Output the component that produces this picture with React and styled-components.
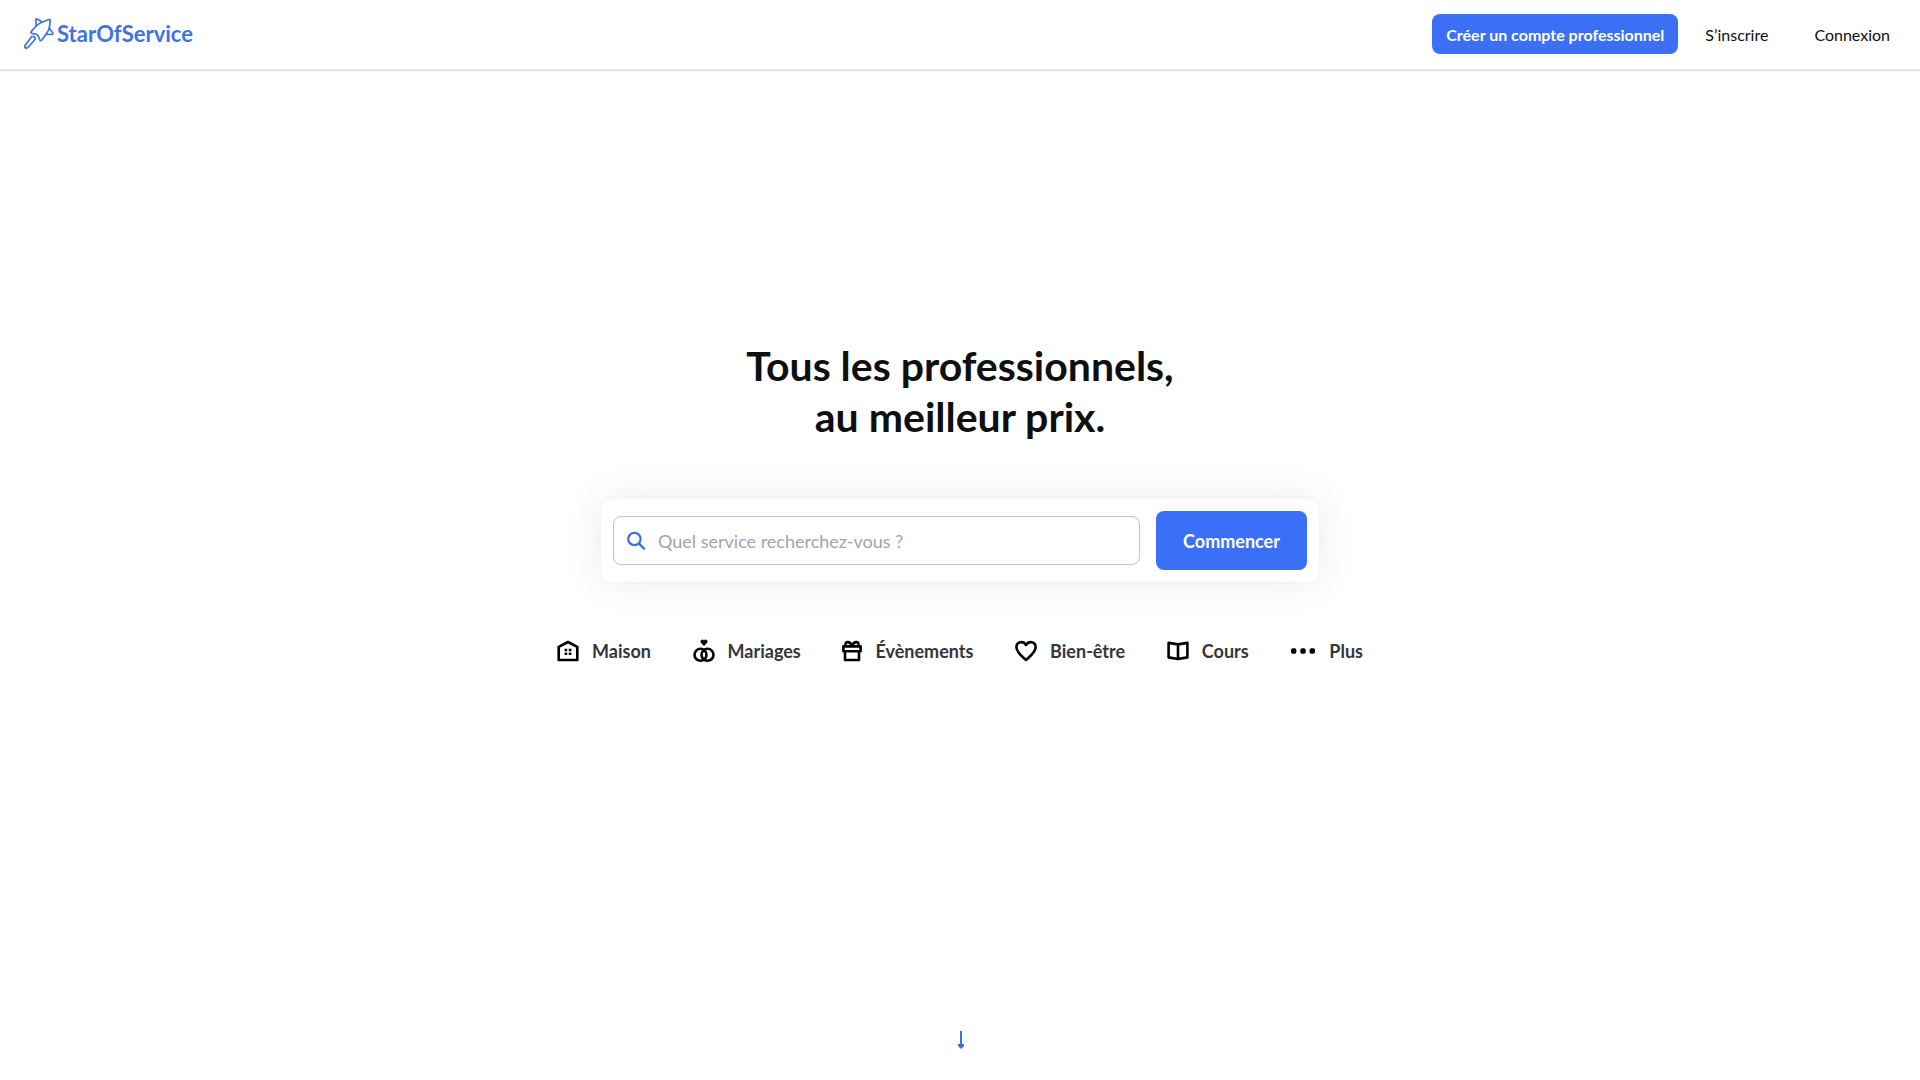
import styled, { createGlobalStyle } from "styled-components";

const GlobalStyle = createGlobalStyle`
  * {
    box-sizing: border-box;
  }

  body {
    margin: 0;
    background: #fff;
    color: #0d0f10;
    font-family: Lato, "Open Sans", sans-serif;
    font-size: 16px;
  }

  a {
    color: inherit;
    text-decoration: none;
  }

  button,
  input {
    font: inherit;
  }
`;

const RocketIcon = () => (
  <svg width="30" height="32" viewBox="0 0 30 32" fill="none" stroke="currentColor" strokeWidth="1.7" strokeLinejoin="round" strokeLinecap="round" aria-hidden="true">
    <path d="M7.4 13.4 L12.4 7.8 Q15 5.2 18.4 4 L24.6 1.7 Q26.4 1.2 26.2 3 L25.4 9.4 Q25 12 23 14.8 L17.8 22 Q16.6 23.4 15.8 21.8 L14.2 18 Q13.4 16.6 12 16.2 L8 15.4 Q6.2 14.8 7.4 13.4 Z" />
    <path d="M12.2 7.8 L11.8 2 Q11.8 .4 13.4 1.2 L18.4 4" />
    <path d="M25.2 10 L28.6 14.8 Q29.4 16.4 27.6 16.5 L22 16.3" />
    <path d="M1.4 27 L7 19.4 Q8.6 17.6 10.4 18.9 Q12 20.3 10.6 22 L4.6 28.8 Q3 30.8 1.5 30 Q.2 28.8 1.4 27 Z" />
  </svg>
);

const SearchIcon = () => (
  <svg width="20" height="20" viewBox="0 0 20 20" fill="none" stroke="#3f6fe0" strokeWidth="2.2" aria-hidden="true">
    <circle cx="7.4" cy="8" r="6.2" />
    <path d="M11.8 12.4 L17.8 18.4" />
  </svg>
);

const HouseIcon = () => (
  <svg width="22" height="22" viewBox="0 0 22 22" fill="none" stroke="#000" strokeWidth="2.6" strokeLinejoin="round" aria-hidden="true">
    <path d="M1.7 6.8 L11 2 L20.3 6.8 V20 H1.7 Z" />
    <path d="M7.6 10h2.6M11.8 10h2.6M7.6 13.8h2.6M11.8 13.8h2.6" strokeWidth="2.6" />
  </svg>
);

const RingsIcon = () => (
  <svg width="22" height="24" viewBox="0 0 22 24" fill="none" stroke="#000" strokeWidth="2.6" aria-hidden="true">
    <circle cx="7.5" cy="15.8" r="6" />
    <circle cx="14.5" cy="15.8" r="6" />
    <path d="M11 7 L7.9 3.7 C6.4 1.6 9.2 -.6 11 1.4 C12.8 -.6 15.6 1.6 14.1 3.7 Z" fill="#000" stroke="none" />
  </svg>
);

const GiftIcon = () => (
  <svg width="20" height="22" viewBox="0 0 20 22" fill="none" stroke="#000" strokeWidth="2.6" strokeLinejoin="round" aria-hidden="true">
    <path d="M1.4 6.4 H18.6 V11.2 H1.4 Z M3 11.2 V20 H17 V11.2" />
    <path d="M3.8 6 C1.8 1.4 8 .4 10 5.8 C12 .4 18.2 1.4 16.2 6" />
  </svg>
);

const HeartIcon = () => (
  <svg width="22" height="22" viewBox="0 0 22 22" fill="none" stroke="#000" strokeWidth="2.6" strokeLinejoin="round" aria-hidden="true">
    <path d="M11 20 C7.2 16.4 1.4 12.2 1.4 7.2 C1.4 1.6 8.2 .4 11 5 C13.8 .4 20.6 1.6 20.6 7.2 C20.6 12.2 14.8 16.4 11 20 Z" />
  </svg>
);

const BookIcon = () => (
  <svg width="22" height="20" viewBox="0 0 22 20" fill="none" stroke="#000" strokeWidth="2.6" strokeLinejoin="round" aria-hidden="true">
    <path d="M11 3.4 L1.6 1.9 V16.4 L11 18 L20.4 16.4 V1.9 Z M11 3.4 V18" />
  </svg>
);

const DotsIcon = () => (
  <svg width="26" height="6" viewBox="0 0 26 6" aria-hidden="true">
    <rect x="1" y=".2" width="5.4" height="5.6" rx="1.8" />
    <rect x="10.3" y=".2" width="5.4" height="5.6" rx="1.8" />
    <rect x="19.6" y=".2" width="5.4" height="5.6" rx="1.8" />
  </svg>
);

const ArrowDownIcon = () => (
  <svg width="8" height="18" viewBox="0 0 8 18" fill="#3f6fe0" aria-hidden="true">
    <path d="M4 0 H6 V13 H8 V15 L5 18 L2 15 V13 H4 Z" />
  </svg>
);

const categories = [
  { label: "Maison", Icon: HouseIcon },
  { label: "Mariages", Icon: RingsIcon },
  { label: "Évènements", Icon: GiftIcon },
  { label: "Bien-être", Icon: HeartIcon },
  { label: "Cours", Icon: BookIcon },
  { label: "Plus", Icon: DotsIcon },
];

const App = () => {
  return (
    <Page>
      <GlobalStyle />
      <Header>
        <Logo href="#">
          <RocketIcon />
          <span>StarOfService</span>
        </Logo>
        <Nav>
          <ProButton type="button">Créer un compte professionnel</ProButton>
          <NavLink href="#">S’inscrire</NavLink>
          <NavLink href="#">Connexion</NavLink>
        </Nav>
      </Header>
      <Hero>
        <Title>
          Tous les professionnels,
          <br />
          au meilleur prix.
        </Title>
        <SearchCard onSubmit={(e) => e.preventDefault()}>
          <SearchField>
            <SearchIcon />
            <SearchInput
              type="text"
              aria-label="Quel service recherchez-vous ?"
              placeholder="Quel service recherchez-vous ?"
            />
          </SearchField>
          <SubmitButton type="submit">Commencer</SubmitButton>
        </SearchCard>
        <Categories>
          {categories.map(({ label, Icon }) => (
            <Category href="#" key={label}>
              <Icon />
              {label}
            </Category>
          ))}
        </Categories>
        <ScrollLink href="#" aria-label="Défiler vers le bas">
          <ArrowDownIcon />
        </ScrollLink>
      </Hero>
    </Page>
  );
};

// Styled Components
const Page = styled.div`
  min-height: 100vh;
  display: flex;
  flex-direction: column;
`;

const Header = styled.header`
  display: flex;
  align-items: center;
  justify-content: space-between;
  padding: 14px 30px 15px 24px;
  border-bottom: 2px solid #e5e5e5;
  box-shadow: 0 1px 1px rgba(0, 0, 0, 0.04);
`;

const Logo = styled.a`
  display: flex;
  align-items: center;
  gap: 3px;
  color: #3f73e3;
  font-size: 22px;
  font-weight: 700;
  line-height: 32px;
`;

const Nav = styled.nav`
  display: flex;
  align-items: center;
`;

const ProButton = styled.button`
  height: 40px;
  padding: 0 14px;
  margin-right: 4px;
  border: 0;
  border-radius: 8px;
  background: #3b6ff6;
  color: #fff;
  font-size: 16px;
  font-weight: 700;
`;

const NavLink = styled.a`
  padding: 0 23px;
  font-size: 16px;

  &:last-child {
    padding-right: 0;
  }
`;

const Hero = styled.main`
  flex: 1;
  display: flex;
  flex-direction: column;
  align-items: center;
  padding: 269px 24px 31px;
`;

const Title = styled.h1`
  margin: 0;
  font-size: 41px;
  font-weight: 700;
  line-height: 51px;
  text-align: center;
`;

const SearchCard = styled.form`
  display: flex;
  align-items: center;
  gap: 16px;
  width: 100%;
  max-width: 718px;
  margin-top: 57px;
  padding: 12px;
  border-radius: 12px;
  background: #fff;
  box-shadow: 0 0 40px rgba(0, 0, 0, 0.09);
`;

const SearchField = styled.label`
  flex: 1;
  display: flex;
  align-items: center;
  gap: 11px;
  height: 49px;
  padding: 0 13px;
  border: 1px solid #c1c2cb;
  border-radius: 8px;
`;

const SearchInput = styled.input`
  flex: 1;
  min-width: 0;
  padding: 0;
  border: 0;
  outline: 0;
  background: none;
  font-size: 18px;

  &::placeholder {
    color: #a0a4b0;
    opacity: 1;
  }
`;

const SubmitButton = styled.button`
  width: 151px;
  height: 59px;
  border: 0;
  border-radius: 8px;
  background: #3b6ff6;
  color: #fff;
  font-size: 18px;
  font-weight: 700;
`;

const Categories = styled.nav`
  display: flex;
  align-items: center;
  justify-content: space-between;
  width: 100%;
  max-width: 806px;
  margin-top: 57px;
`;

const Category = styled.a`
  display: flex;
  align-items: center;
  gap: 13px;
  height: 24px;
  color: #35363b;
  font-size: 18px;
  font-weight: 700;
`;

const ScrollLink = styled.a`
  display: flex;
  margin-top: auto;
`;

export default App;
